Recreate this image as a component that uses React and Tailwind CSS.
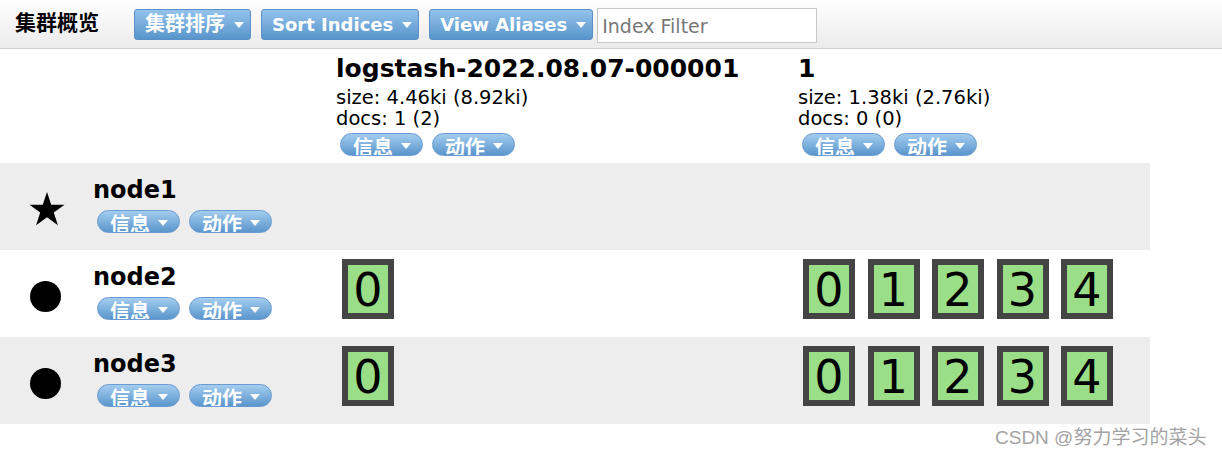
import React from "react";

const font = "font-['DejaVu_Sans','Noto_Sans_CJK_SC',sans-serif]";

function Caret() {
  return (
    <span className="inline-block w-0 h-0 border-l-[5px] border-r-[5px] border-t-[6px] border-l-transparent border-r-transparent border-t-white" />
  );
}

function TopButton({ label, cjk }) {
  return (
    <div className="h-[31px] flex items-center pl-[10px] pr-[6px] rounded-[3px] border border-[#5b8fc8] bg-gradient-to-b from-[#94c3ec] to-[#5895cb] text-white font-bold">
      <span className={cjk ? "text-[20px]" : "text-[18px]"}>{label}</span>
      <span className="ml-[9px] mt-[2px] flex">
        <Caret />
      </span>
    </div>
  );
}

function Pill({ label }) {
  return (
    <div className="w-[83px] h-[23px] overflow-hidden rounded-full border border-[#6b9bd2] bg-gradient-to-b from-[#a3cdef] to-[#5a96cc] text-white font-bold flex items-start pl-[12px]">
      <span className="text-[20px] leading-none pt-[4px]">{label}</span>
      <span className="ml-[8px] mt-[9px] flex">
        <Caret />
      </span>
    </div>
  );
}

function Pills() {
  return (
    <div className="flex gap-[9px] ml-[4px]">
      <Pill label="信息" />
      <Pill label="动作" />
    </div>
  );
}

function Shard({ n }) {
  return (
    <div className="w-[52px] h-[60px] border-[6px] border-[#444] bg-[#9ade88] flex items-center justify-center">
      <span className="text-[46px] leading-none text-black mt-[2px]">{n}</span>
    </div>
  );
}

function Star() {
  return (
    <svg width="36" height="34" viewBox="0 0 100 95">
      <polygon
        points="50,0 61.8,35.4 99,35.4 69,57.3 80.4,92.7 50,70.8 19.6,92.7 31,57.3 1,35.4 38.2,35.4"
        fill="#000"
      />
    </svg>
  );
}

const nodes = [
  { name: "node1", master: true, shards: null },
  { name: "node2", master: false, shards: true },
  { name: "node3", master: false, shards: true },
];

export default function App() {
  return (
    <div className={`relative h-[454px] w-[1222px] bg-white text-black overflow-hidden ${font}`}>
      {/* top bar */}
      <div className="h-[49px] flex items-center pl-[15px] bg-gradient-to-b from-white to-[#ebebeb] border-b border-[#cfcfcf]">
        <span className="text-[21px] font-bold mr-[35px]">集群概览</span>
        <div className="flex gap-[10px] items-center">
          <TopButton label="集群排序" cjk />
          <TopButton label="Sort Indices" />
          <TopButton label="View Aliases" />
        </div>
        <input
          placeholder="Index Filter"
          className="ml-[4px] mt-[3px] w-[220px] h-[35px] border border-[#c8c8c8] bg-white px-[4px] text-[19px] placeholder:text-[#777] outline-none"
        />
      </div>

      {/* index header row */}
      <div className="flex w-[1150px] h-[114px]">
        <div className="w-[336px]" />
        <div className="w-[462px] pt-[5px]">
          <div className="text-[25px] font-bold leading-[30px] mb-[3px]">logstash-2022.08.07-000001</div>
          <div className="text-[19.5px] leading-[21px]">size: 4.46ki (8.92ki)</div>
          <div className="text-[19.5px] leading-[21px] mb-[4px]">docs: 1 (2)</div>
          <Pills />
        </div>
        <div className="flex-1 pt-[5px]">
          <div className="text-[25px] font-bold leading-[30px] mb-[3px]">1</div>
          <div className="text-[19.5px] leading-[21px]">size: 1.38ki (2.76ki)</div>
          <div className="text-[19.5px] leading-[21px] mb-[4px]">docs: 0 (0)</div>
          <Pills />
        </div>
      </div>

      {/* node rows */}
      {nodes.map((node, i) => (
        <div
          key={node.name}
          className={`flex w-[1150px] h-[87px] ${i % 2 === 0 ? "bg-[#ededed]" : "bg-white"}`}
        >
          <div className="w-[336px] flex">
            <div className="w-[93px] flex items-center justify-center pt-[5px]">
              {node.master ? (
                <Star />
              ) : (
                <div className="w-[31px] h-[31px] rounded-full bg-black mr-[3px]" />
              )}
            </div>
            <div className="pt-[13px]">
              <div className="text-[24px] font-bold leading-[28px] mb-[6px]">{node.name}</div>
              <Pills />
            </div>
          </div>
          <div className="w-[462px] pt-[9px] pl-[6px]">
            {node.shards && <Shard n={0} />}
          </div>
          <div className="flex-1 pt-[9px] pl-[5px]">
            {node.shards && (
              <div className="flex gap-[12.5px]">
                {[0, 1, 2, 3, 4].map((n) => (
                  <Shard key={n} n={n} />
                ))}
              </div>
            )}
          </div>
        </div>
      ))}

      {/* watermark */}
      <div className="absolute left-[995px] top-[424px] text-[19px] text-[#a3a3a3] font-['Liberation_Sans','Noto_Sans_CJK_SC',sans-serif]">
        CSDN @努力学习的菜头
      </div>
    </div>
  );
}
